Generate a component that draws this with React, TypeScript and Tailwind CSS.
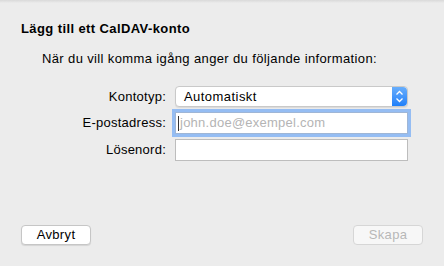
import React from "react";

const fieldRows = [
  { label: "Kontotyp:", kind: "select" },
  { label: "E-postadress:", kind: "email" },
  { label: "Lösenord:", kind: "password" },
];

const Stepper = () => (
  <div className="flex h-full w-[15px] items-center justify-center rounded-r-[4px] bg-gradient-to-b from-[#68aefc] to-[#1d7ff9]">
    <svg width="9" height="13" viewBox="0 0 9 13" fill="none">
      <path d="M1.5 4.5 L4.5 1.5 L7.5 4.5" stroke="white" strokeWidth="1.3" />
      <path d="M1.5 8.5 L4.5 11.5 L7.5 8.5" stroke="white" strokeWidth="1.3" />
    </svg>
  </div>
);

const Field = ({ kind }: { kind: string }) => {
  if (kind === "select") {
    return (
      <div className="flex h-[21px] w-[233px] items-center justify-between rounded-[4px] border border-[#c9c9c9] bg-white pl-[8px] shadow-[0_1px_1px_rgba(0,0,0,0.08)]">
        <span className="text-[13px] tracking-[0.45px] text-black">Automatiskt</span>
        <Stepper />
      </div>
    );
  }
  if (kind === "email") {
    return (
      <div className="flex h-[22px] w-[233px] items-center border border-[#9fb6d6] bg-white pl-[2px] shadow-[0_0_0_3px_#95bdf3]">
        <span className="mr-[1px] h-[15px] w-[1px] bg-[#333]" />
        <span className="text-[13px] tracking-[0.25px] text-[#b4b4b4]">john.doe@exempel.com</span>
      </div>
    );
  }
  return <div className="h-[22px] w-[233px] border border-[#bdbdbd] bg-white" />;
};

export default function App() {
  return (
    <div
      className="flex h-[266px] w-[444px] flex-col bg-[#ececec] text-black"
      style={{ fontFamily: '"Liberation Sans", Arial, sans-serif' }}
    >
      <div className="h-[3px] w-full bg-gradient-to-b from-[#d9d9d9] to-[#ececec]" />
      <p className="mt-[18px] pl-[21px] text-[13px] font-bold leading-[16px] tracking-[0.4px]">
        Lägg till ett CalDAV-konto
      </p>
      <p className="mt-[14px] pl-[42px] text-[13px] leading-[16px] tracking-[0.37px]">
        När du vill komma igång anger du följande information:
      </p>
      <div className="mt-[19px] grid grid-cols-[166px_233px] items-center gap-x-[9px] gap-y-[5px]">
        {fieldRows.map((row) => (
          <React.Fragment key={row.label}>
            <span className="text-right text-[13px] leading-[16px] tracking-[0.25px]">{row.label}</span>
            <Field kind={row.kind} />
          </React.Fragment>
        ))}
      </div>
      <div className="mt-auto mb-[21px] flex justify-between px-[21px]">
        <button className="h-[20px] w-[70px] rounded-[4px] border border-[#c6c6c6] bg-white text-[13px] leading-[16px] tracking-[0.35px] text-black shadow-[0_1px_1px_rgba(0,0,0,0.1)]">
          Avbryt
        </button>
        <button className="h-[20px] w-[70px] rounded-[4px] border border-[#d6d6d6] bg-[#f7f7f7] text-[13px] leading-[16px] tracking-[0.35px] text-[#b7b7b7]">
          Skapa
        </button>
      </div>
    </div>
  );
}
